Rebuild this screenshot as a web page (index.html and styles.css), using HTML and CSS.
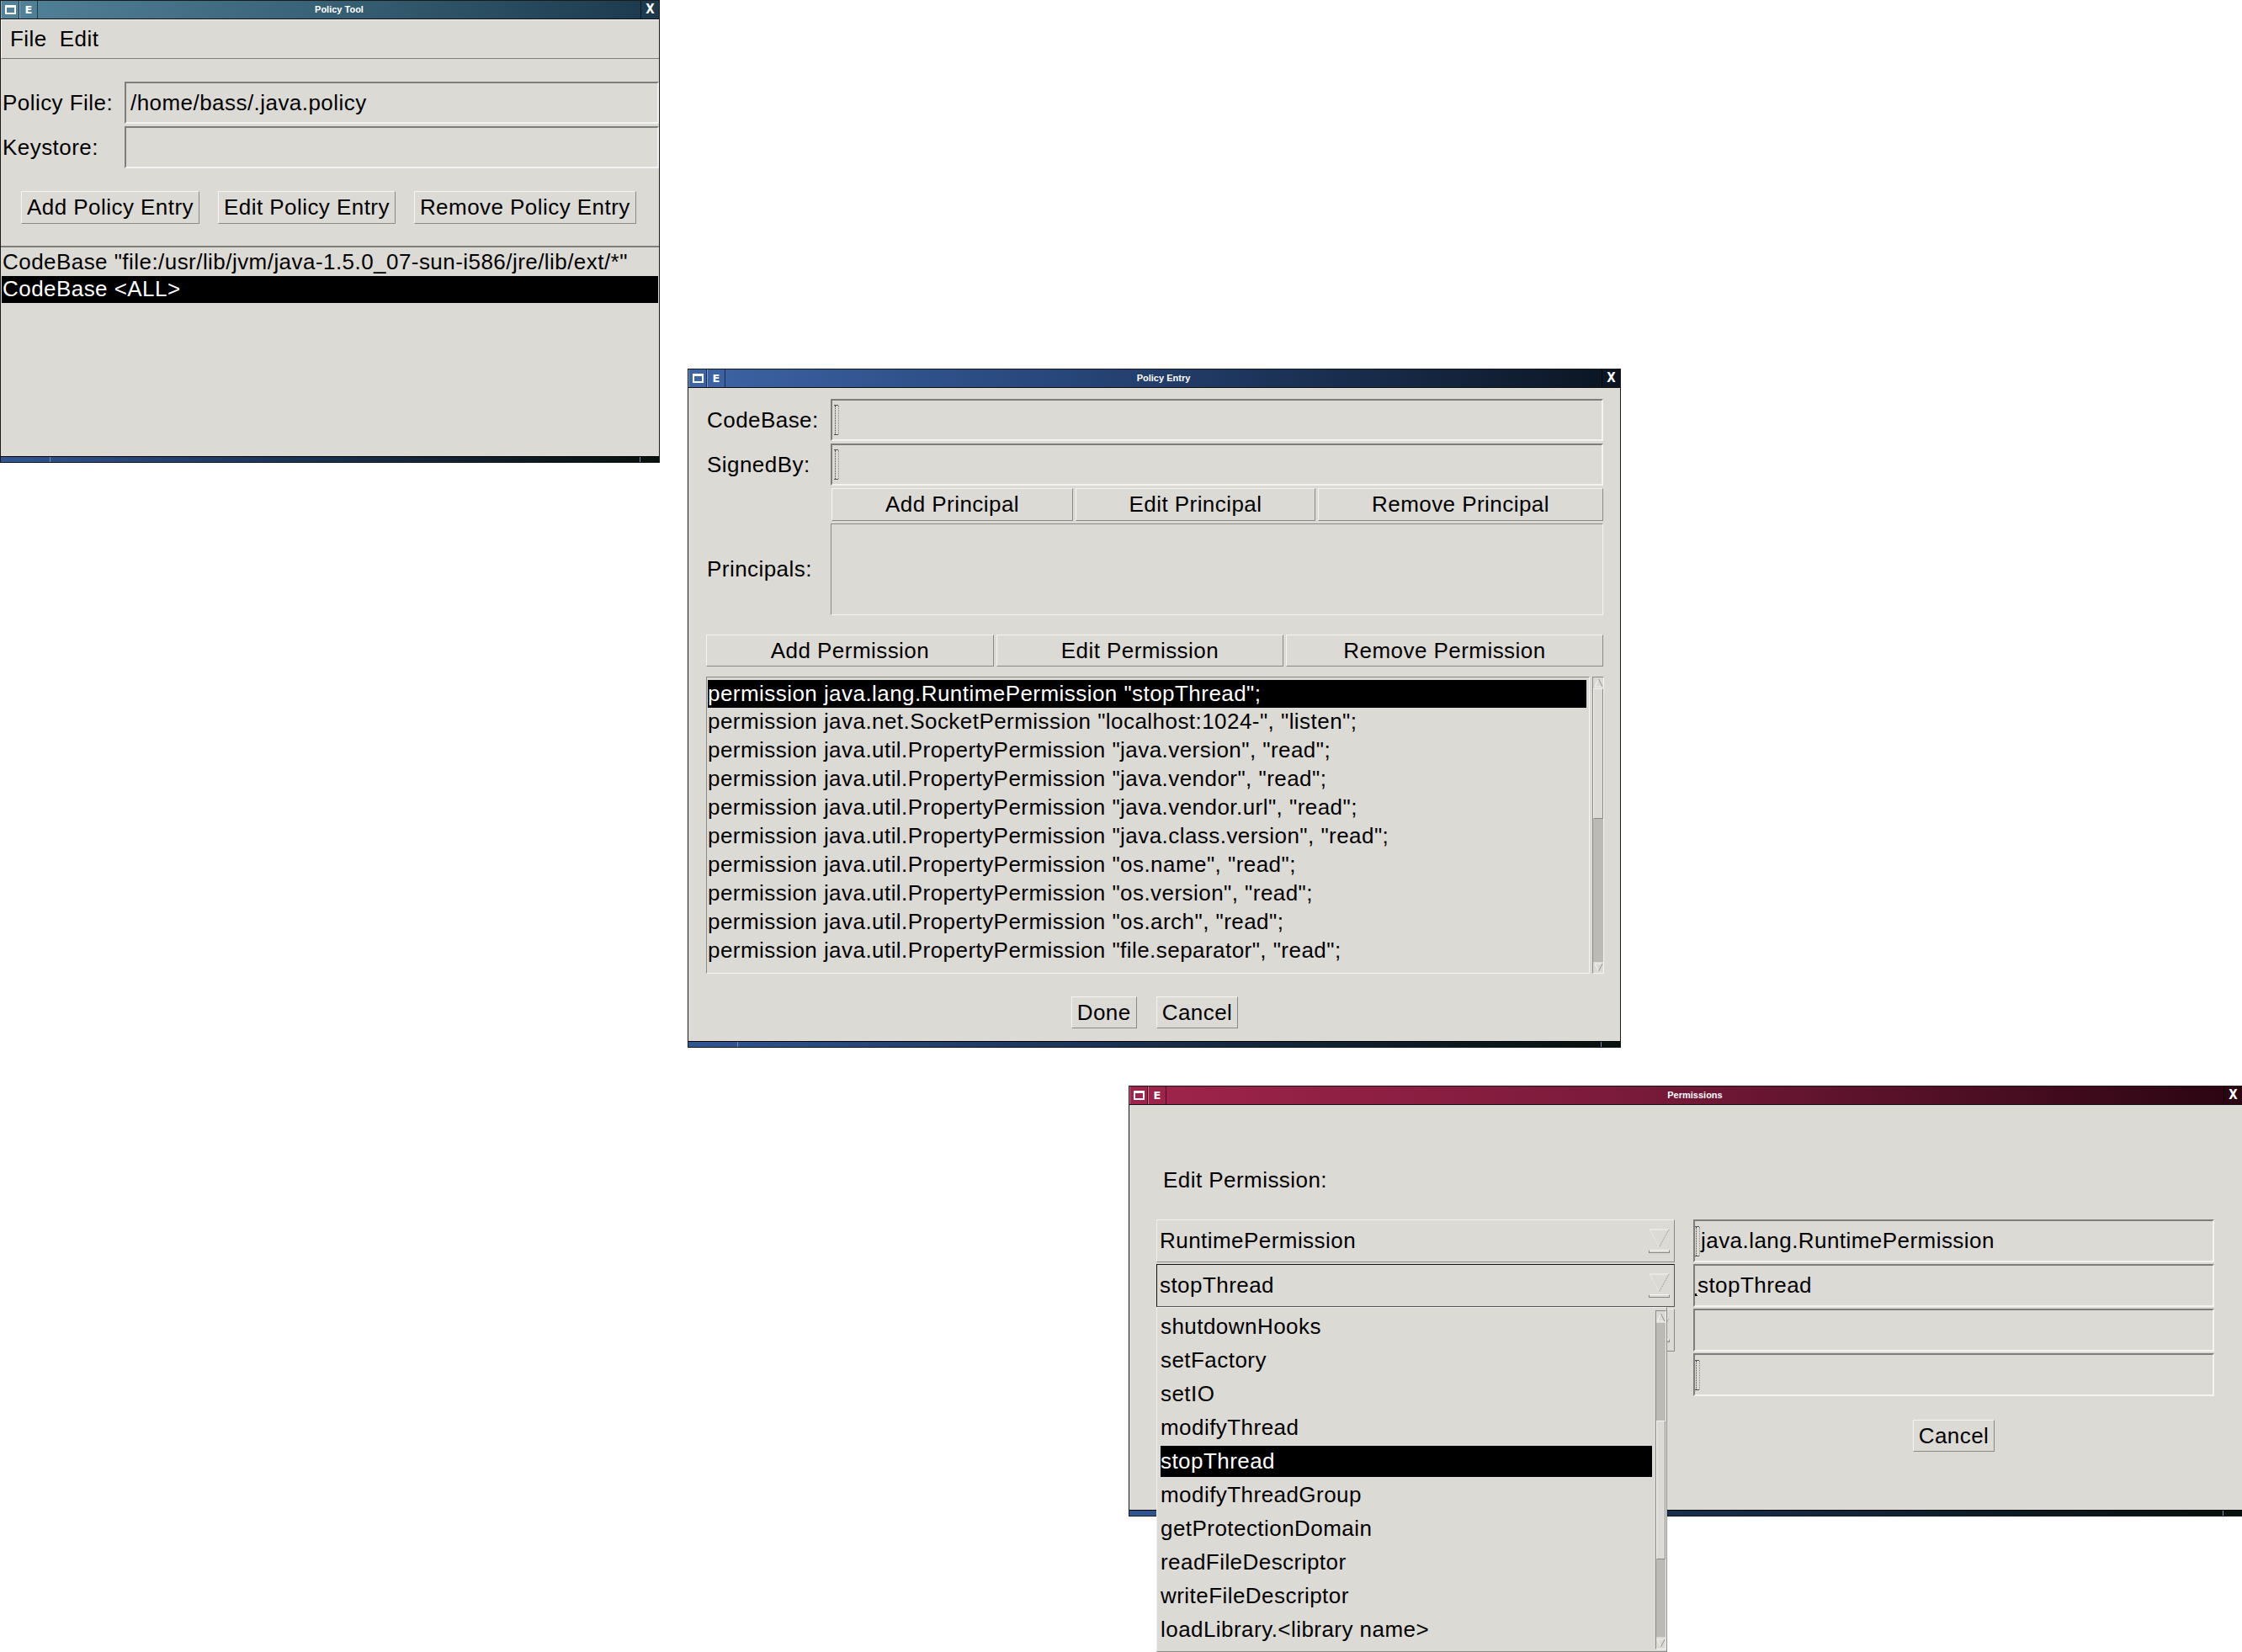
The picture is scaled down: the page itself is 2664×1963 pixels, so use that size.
FILE: index.html
```html
<!DOCTYPE html>
<html>
<head>
<meta charset="utf-8">
<title>Policy Tool</title>
<link rel="stylesheet" href="styles.css">
</head>
<body>

<!-- Window 1: Policy Tool -->
<div class="win win-tool">
  <div class="titlebar tb-teal">
    <span class="tb-btn"><span class="tb-box"></span></span>
    <span class="tb-btn tb-e">E</span>
    <span class="tb-title">Policy Tool</span>
    <span class="tb-close">X</span>
  </div>
  <div class="win-body tool-body">
    <div class="menubar"><span>File</span><span>Edit</span></div>
    <div class="form tool-form">
      <span class="lbl">Policy File:</span>
      <div class="field">/home/bass/.java.policy</div>
      <span class="lbl">Keystore:</span>
      <div class="field"></div>
    </div>
    <div class="tool-btns">
      <div class="btn">Add Policy Entry</div>
      <div class="btn">Edit Policy Entry</div>
      <div class="btn">Remove Policy Entry</div>
    </div>
    <div class="tool-list">
      <div class="row">CodeBase "file:/usr/lib/jvm/java-1.5.0_07-sun-i586/jre/lib/ext/*"</div>
      <div class="row sel">CodeBase &lt;ALL&gt;</div>
    </div>
  </div>
  <div class="win-foot"><span class="foot-sep"></span><span class="foot-sep"></span></div>
</div>

<!-- Window 2: Policy Entry -->
<div class="win win-entry">
  <div class="titlebar tb-blue">
    <span class="tb-btn"><span class="tb-box"></span></span>
    <span class="tb-btn tb-e">E</span>
    <span class="tb-title">Policy Entry</span>
    <span class="tb-close">X</span>
  </div>
  <div class="win-body entry-body">
    <div class="entry-grid">
      <span class="lbl">CodeBase:</span>
      <div class="field"><span class="ibeam"></span></div>
      <span class="lbl">SignedBy:</span>
      <div class="field"><span class="ibeam"></span></div>
      <span></span>
      <div class="principal-btns">
        <div class="btn btn-c">Add Principal</div>
        <div class="btn btn-c">Edit Principal</div>
        <div class="btn btn-c">Remove Principal</div>
      </div>
      <span class="lbl">Principals:</span>
      <div class="sunken-box"></div>
    </div>
    <div class="perm-btns">
      <div class="btn btn-c">Add Permission</div>
      <div class="btn btn-c">Edit Permission</div>
      <div class="btn btn-c">Remove Permission</div>
    </div>
    <div class="perm-area">
      <div class="perm-list">
        <div class="prow sel">permission java.lang.RuntimePermission "stopThread";</div>
        <div class="prow">permission java.net.SocketPermission "localhost:1024-", "listen";</div>
        <div class="prow">permission java.util.PropertyPermission "java.version", "read";</div>
        <div class="prow">permission java.util.PropertyPermission "java.vendor", "read";</div>
        <div class="prow">permission java.util.PropertyPermission "java.vendor.url", "read";</div>
        <div class="prow">permission java.util.PropertyPermission "java.class.version", "read";</div>
        <div class="prow">permission java.util.PropertyPermission "os.name", "read";</div>
        <div class="prow">permission java.util.PropertyPermission "os.version", "read";</div>
        <div class="prow">permission java.util.PropertyPermission "os.arch", "read";</div>
        <div class="prow">permission java.util.PropertyPermission "file.separator", "read";</div>
      </div>
      <div class="vscroll vscroll-entry">
        <div class="sb-arrow"><svg width="11" height="11" viewBox="0 0 11 11"><path d="M1 10 L5.5 1 L10 10 Z" fill="none" stroke="#f4f4f2" stroke-width="1"/><path d="M10 10 L5.5 1" stroke="#8a8a88" stroke-width="1"/></svg></div>
        <div class="sb-thumb" style="height:155px"></div>
        <div class="sb-trough sb-fill"></div>
        <div class="sb-arrow"><svg width="11" height="11" viewBox="0 0 11 11"><path d="M1 1 L10 1 L5.5 10 Z" fill="none" stroke="#f4f4f2" stroke-width="1"/><path d="M10 1 L5.5 10" stroke="#8a8a88" stroke-width="1"/></svg></div>
      </div>
    </div>
    <div class="dialog-btns">
      <div class="btn">Done</div>
      <div class="btn">Cancel</div>
    </div>
  </div>
  <div class="win-foot"><span class="foot-sep"></span><span class="foot-sep"></span></div>
</div>

<!-- Window 3: Permissions -->
<div class="win win-perm">
  <div class="titlebar tb-red">
    <span class="tb-btn"><span class="tb-box"></span></span>
    <span class="tb-btn tb-e">E</span>
    <span class="tb-title">Permissions</span>
    <span class="tb-close">X</span>
  </div>
  <div class="win-body perm-body">
    <div class="perm-label">Edit Permission:</div>
    <div class="perm-grid">
      <div class="choice c1">RuntimePermission<span class="choice-arrow"><svg width="25" height="30" viewBox="0 0 25 30"><path d="M1 1 L24 1" stroke="#f4f4f2"/><path d="M1 1 L12.5 22" stroke="#f4f4f2" stroke-dasharray="1 1"/><path d="M24 1 L12.5 22" stroke="#8a8a88" stroke-dasharray="1 1"/><rect x="0.5" y="25.5" width="24" height="3" fill="none" stroke="#8a8a88"/><path d="M0.5 25.5 L24.5 25.5" stroke="#f4f4f2"/></svg></span></div>
      <div class="field f1"><span class="ibeam"></span>java.lang.RuntimePermission</div>
      <div class="choice c2 focus">stopThread<span class="choice-arrow"><svg width="25" height="30" viewBox="0 0 25 30"><path d="M1 1 L24 1" stroke="#f4f4f2"/><path d="M1 1 L12.5 22" stroke="#f4f4f2" stroke-dasharray="1 1"/><path d="M24 1 L12.5 22" stroke="#8a8a88" stroke-dasharray="1 1"/><rect x="0.5" y="25.5" width="24" height="3" fill="none" stroke="#8a8a88"/><path d="M0.5 25.5 L24.5 25.5" stroke="#f4f4f2"/></svg></span></div>
      <div class="field f2"><span class="caret"></span>stopThread</div>
      <div class="choice c3"><span class="choice-arrow"><svg width="25" height="30" viewBox="0 0 25 30"><path d="M1 1 L24 1" stroke="#f4f4f2"/><path d="M1 1 L12.5 22" stroke="#f4f4f2" stroke-dasharray="1 1"/><path d="M24 1 L12.5 22" stroke="#8a8a88" stroke-dasharray="1 1"/><rect x="0.5" y="25.5" width="24" height="3" fill="none" stroke="#8a8a88"/><path d="M0.5 25.5 L24.5 25.5" stroke="#f4f4f2"/></svg></span></div>
      <div class="field f3"></div>
      <div class="field f4"><span class="ibeam"></span></div>
      <div class="btn cancel-perm">Cancel</div>
    </div>

    <div class="popup">
      <div class="popup-items">
        <div class="pitem">shutdownHooks</div>
        <div class="pitem">setFactory</div>
        <div class="pitem">setIO</div>
        <div class="pitem">modifyThread</div>
        <div class="pitem sel">stopThread</div>
        <div class="pitem">modifyThreadGroup</div>
        <div class="pitem">getProtectionDomain</div>
        <div class="pitem">readFileDescriptor</div>
        <div class="pitem">writeFileDescriptor</div>
        <div class="pitem">loadLibrary.&lt;library name&gt;</div>
      </div>
      <div class="vscroll vscroll-popup">
        <div class="sb-arrow"><svg width="11" height="11" viewBox="0 0 11 11"><path d="M1 10 L5.5 1 L10 10 Z" fill="none" stroke="#f4f4f2" stroke-width="1"/><path d="M10 10 L5.5 1" stroke="#8a8a88" stroke-width="1"/></svg></div>
        <div class="sb-trough" style="height:116px"></div>
        <div class="sb-thumb" style="height:165px"></div>
        <div class="sb-trough sb-fill"></div>
        <div class="sb-arrow"><svg width="11" height="11" viewBox="0 0 11 11"><path d="M1 1 L10 1 L5.5 10 Z" fill="none" stroke="#f4f4f2" stroke-width="1"/><path d="M10 1 L5.5 10" stroke="#8a8a88" stroke-width="1"/></svg></div>
      </div>
    </div>
  </div>
  <div class="win-foot"><span class="foot-sep"></span><span class="foot-sep"></span></div>
</div>

</body>
</html>
```

FILE: styles.css
```css
* { box-sizing: border-box; }
html, body { margin: 0; padding: 0; }
body {
  width: 2664px;
  height: 1963px;
  position: relative;
  overflow: hidden;
  background: #ffffff;
  font-family: "Liberation Sans", Arial, sans-serif;
  font-size: 26px;
  letter-spacing: 0.45px;
  color: #000;
}

/* ---------- windows ---------- */
.win {
  position: absolute;
  display: flex;
  flex-direction: column;
  background: #dcdad5;
  border: 1px solid #1a1a1a;
}
.win-tool  { left: 0;      top: 0;      width: 784px;  height: 550px; }
.win-entry { left: 817px;  top: 438px;  width: 1109px; height: 807px; }
.win-perm  { left: 1341px; top: 1290px; width: 1324px; height: 512px; }

.titlebar {
  flex: none;
  height: 22px;
  display: flex;
  align-items: stretch;
  color: #fff;
  border-bottom: 1px solid #111;
}
.tb-teal { background: linear-gradient(90deg, #52839a 0%, #3a6479 45%, #1c394c 100%); }
.tb-blue { background: linear-gradient(90deg, #3d64a5 0%, #27467a 40%, #0b1522 100%); }
.tb-red  { background: linear-gradient(90deg, #a0244c 0%, #7a1a3a 45%, #2a0511 100%); }

.tb-btn {
  flex: none;
  width: 22px;
  display: flex;
  align-items: center;
  justify-content: center;
  border-left: 1px solid rgba(255,255,255,0.35);
  border-right: 1px solid rgba(0,0,0,0.55);
}
.tb-box {
  width: 13px;
  height: 11px;
  border: 2px solid #fff;
  border-top-width: 3px;
}
.tb-e {
  font-family: "DejaVu Sans", sans-serif;
  font-weight: bold;
  font-size: 13px;
  letter-spacing: 0;
}
.tb-title {
  flex: 1;
  text-align: center;
  font-family: "Liberation Sans Narrow", "Liberation Sans", sans-serif;
  font-weight: bold;
  font-size: 11px;
  letter-spacing: 0;
  line-height: 21px;
}
.tb-close {
  flex: none;
  width: 22px;
  text-align: center;
  font-family: "DejaVu Sans Condensed", "DejaVu Sans", sans-serif;
  font-weight: bold;
  font-size: 15px;
  letter-spacing: 0;
  line-height: 21px;
  border-left: 1px solid rgba(0,0,0,0.6);
}

.win-body {
  flex: 1;
  display: flex;
  flex-direction: column;
  position: relative;
}

.win-foot {
  flex: none;
  height: 7px;
  border-top: 1px solid #000;
  background: linear-gradient(90deg, #2f5593 0%, #1e3a63 35%, #0c1a22 80%, #07110c 100%);
  display: flex;
  justify-content: space-between;
  padding: 0 22px 0 58px;
}
.foot-sep { width: 1px; background: #7b8da8; }

/* ---------- common widgets ---------- */
.lbl {
  display: flex;
  align-items: center;
  white-space: nowrap;
}
.field {
  display: flex;
  align-items: center;
  padding-left: 5px;
  border: 2px solid;
  border-color: #7d7d7b #f3f3f1 #f3f3f1 #7d7d7b;
  white-space: nowrap;
  overflow: hidden;
}
.btn {
  display: flex;
  align-items: center;
  justify-content: center;
  padding: 0 6px;
  border: 1px solid;
  border-color: #f4f4f2 #8a8a88 #8a8a88 #f4f4f2;
  white-space: nowrap;
}
.sunken-box {
  border: 1px solid;
  border-color: #8a8a88 #f4f4f2 #f4f4f2 #8a8a88;
}
.sel { background: #000; color: #fff; }

.ibeam {
  flex: none;
  width: 5px;
  height: 36px;
  margin-right: 2px;
  margin-left: -3px;
  border-top: 1px solid #555;
  border-bottom: 1px solid #555;
  position: relative;
}
.ibeam::before {
  content: "";
  position: absolute;
  left: 1px;
  top: 0;
  bottom: 0;
  width: 3px;
  border-left: 1px dotted #444;
  border-right: 1px dotted #888;
}
.caret {
  flex: none;
  width: 4px;
  height: 4px;
  margin-left: -4px;
  align-self: flex-end;
  margin-bottom: 8px;
  border-top: 1px solid #000;
  position: relative;
}
.caret::before {
  content: "";
  position: absolute;
  left: 1px;
  top: -3px;
  width: 2px;
  height: 3px;
  background: #000;
}

/* scrollbars */
.vscroll {
  flex: none;
  display: flex;
  flex-direction: column;
  border: 1px solid;
  border-color: #8a8a88 #f4f4f2 #f4f4f2 #8a8a88;
}
.sb-arrow {
  flex: none;
  height: 13px;
  display: flex;
  align-items: center;
  justify-content: center;
  background: #dcdad5;
}
.sb-thumb {
  flex: none;
  background: #dcdad5;
  border: 1px solid;
  border-color: #f4f4f2 #8a8a88 #8a8a88 #f4f4f2;
}
.sb-trough { flex: none; background: #bcbab5; }
.sb-fill { flex: 1; }

/* ---------- window 1 ---------- */
.menubar {
  flex: none;
  height: 47px;
  display: flex;
  gap: 15px;
  padding-left: 10px;
  line-height: 45px;
  border-top: 1px solid #f4f4f2;
  border-left: 1px solid #f4f4f2;
  border-bottom: 1px solid #7d7d7b;
}
.tool-form {
  margin-top: 27px;
  display: grid;
  grid-template-columns: 147px 1fr;
  grid-auto-rows: 50px;
  row-gap: 3px;
  padding-right: 0;
}
.tool-form .lbl { padding-left: 2px; }
.tool-btns {
  margin-top: 27px;
  height: 39px;
  display: flex;
  gap: 22px;
  padding-left: 24px;
}
.tool-list {
  margin-top: 26px;
  flex: 1;
  border-top: 2px solid #7d7d7b;
  padding: 1px 1px 0 1px;
}
.tool-list .row {
  height: 33px;
  line-height: 33px;
  padding-left: 1px;
  white-space: nowrap;
}
.tool-list .row.sel { height: 32px; line-height: 31px; }

/* ---------- window 2 ---------- */
.entry-body { padding: 13px 20px 0 21px; }
.entry-grid {
  display: grid;
  grid-template-columns: 148px 1fr;
  grid-template-rows: 50px 50px 39px 109px;
  row-gap: 3px;
}
.entry-grid .lbl { padding-left: 1px; }
.principal-btns {
  display: grid;
  grid-template-columns: 287fr 285fr 339fr;
  gap: 3px;
  margin-left: 1px;
}
.perm-btns {
  margin-top: 23px;
  height: 38px;
  display: grid;
  grid-template-columns: 341fr 340fr 376fr;
  gap: 3px;
}
.perm-area {
  margin-top: 12px;
  height: 353px;
  display: flex;
  gap: 3px;
  margin-right: -1px;
}
.perm-list {
  flex: 1;
  padding: 3px 3px 0 1px;
  border: 1px solid;
  border-color: #8a8a88 #f4f4f2 #f4f4f2 #8a8a88;
  overflow: hidden;
}
.prow {
  height: 34px;
  line-height: 33px;
  white-space: nowrap;
}
.prow.sel { height: 33px; }
.vscroll-entry { width: 14px; }
.dialog-btns {
  margin-top: 27px;
  height: 38px;
  display: flex;
  justify-content: center;
  gap: 23px;
}

/* ---------- window 3 ---------- */
.perm-body { padding: 74px 33px 0 32px; }
.perm-label {
  height: 30px;
  line-height: 30px;
  padding-left: 8px;
}
.perm-grid {
  margin-top: 32px;
  display: grid;
  grid-template-columns: 616px 1fr;
  grid-auto-rows: 51px;
  column-gap: 22px;
  row-gap: 2px;
}
.choice {
  grid-column: 1;
  display: flex;
  align-items: center;
  padding-left: 3px;
  padding-right: 5px;
  border: 1px solid;
  border-color: #f0efec #8a8a88 #8a8a88 #f0efec;
  white-space: nowrap;
}
.choice.focus { border-color: #111 #555 #555 #111; }
.choice-arrow {
  margin-left: auto;
  display: flex;
  align-items: center;
}
.c1 { grid-row: 1; }
.c2 { grid-row: 2; }
.c3 { grid-row: 3; }
.perm-grid .field { grid-column: 2; padding-left: 3px; }
.f1 { grid-row: 1; }
.f2 { grid-row: 2; }
.f3 { grid-row: 3; }
.f4 { grid-row: 4; }
.cancel-perm {
  grid-column: 2;
  grid-row: 5;
  justify-self: center;
  align-self: start;
  margin-top: 26px;
  height: 38px;
  width: 97px;
}

.popup {
  position: absolute;
  left: 32px;
  top: 240px;
  width: 607px;
  height: 410px;
  display: flex;
  gap: 4px;
  background: #dcdad5;
  border: 1px solid;
  border-color: #f0efec #8a8a88 #8a8a88 #f0efec;
  padding: 3px 0 2px 4px;
}
.popup-items { flex: 1; padding-top: 1px; }
.pitem {
  height: 37px;
  line-height: 37px;
  margin-bottom: 3px;
  white-space: nowrap;
}
.vscroll-popup { width: 13px; }
.vscroll-popup .sb-arrow { height: 14px; }
```
